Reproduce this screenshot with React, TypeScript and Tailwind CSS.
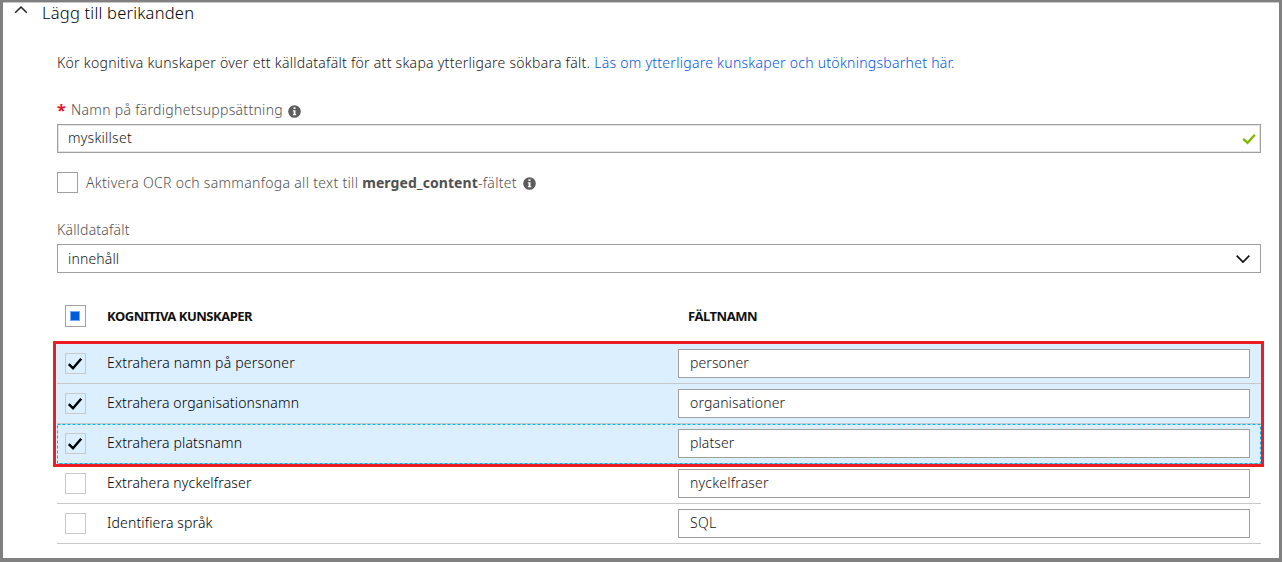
import React from "react";

const rows = [
  { label: "Extrahera namn på personer", field: "personer", checked: true, focus: false, lt: "tracking-[0.2px]", ft: "tracking-[0.1px]" },
  { label: "Extrahera organisationsnamn", field: "organisationer", checked: true, focus: false, lt: "tracking-[0.16px]", ft: "tracking-[0.15px]" },
  { label: "Extrahera platsnamn", field: "platser", checked: true, focus: true, lt: "tracking-[0.17px]", ft: "tracking-[0.1px]" },
  { label: "Extrahera nyckelfraser", field: "nyckelfraser", checked: false, focus: false, lt: "tracking-[0.16px]", ft: "tracking-[0.2px]" },
  { label: "Identifiera språk", field: "SQL", checked: false, focus: false, lt: "tracking-[0.15px]", ft: "tracking-[0.3px]" },
];

function Info() {
  return (
    <svg className="size-[13px] shrink-0" viewBox="0 0 13 13">
      <circle cx="6.5" cy="6.5" r="6.3" fill="#5c5c5c" />
      <path d="M5.500 2.200h2v1.800h-2zM4.900 5.200h2.600v4h.7v1.100H4.900V9.200h.7V6.300h-.7z" fill="#fff" />
    </svg>
  );
}

function Row({ r }: { r: (typeof rows)[number] }) {
  return (
    <div className={"relative flex h-10 items-start border-b border-[#c8c8c8] " + (r.checked ? "bg-[#dceffe]" : "bg-white")}>
      <div className={"ml-2 mt-[9px] flex size-[21px] shrink-0 items-center border border-[#c8c8c8] pl-px " + (r.checked ? "" : "bg-white")}>
        {r.checked && (
          <svg className="h-[14px] w-[16px]" viewBox="0 0 16 14">
            <path d="M1.800 7.200 6 11.300 14.200 1.800" fill="none" stroke="#000" strokeWidth="2.500" />
          </svg>
        )}
      </div>
      <div className={"ml-[21px] mt-[9px] w-[571px] shrink-0 leading-5 text-black " + r.lt}>{r.label}</div>
      <div className={"mt-[5px] h-[29px] w-[572px] border border-[#a0a0a0] bg-white pl-[11px] leading-[25px] text-[#151515] " + r.ft}>{r.field}</div>
      {r.focus && (
        <svg className="absolute left-0 top-0 h-10 w-[1204px]" viewBox="0 0 1204 40">
          <rect x="0.5" y="0.5" width="1203" height="39" fill="none" stroke="#00b4f0" strokeDasharray="3 2" />
        </svg>
      )}
    </div>
  );
}

export default function App() {
  return (
    <div className="h-[562px] w-[1283px] overflow-hidden bg-white pr-px font-['Noto_Sans',sans-serif] text-[14px] font-[360]">
      <div className="relative h-[562px] w-[1282px] border-b-4 border-l-[3px] border-r-[3px] border-t-2 border-[#808080] bg-white">
        <div className="flex h-[51px] items-start border-t border-[#c8c8c8] pl-[11px]">
          <svg className="mt-[1px] h-[10px] w-[14px]" viewBox="0 0 14 10">
            <path d="M1.200 8.800 7 3l5.800 5.800" fill="none" stroke="#222" strokeWidth="1.500" />
          </svg>
          <h2 className="ml-[14px] whitespace-nowrap text-[16.5px] leading-[20px] tracking-[0.22px] text-black">Lägg till berikanden</h2>
        </div>
        <div className="ml-[54px] w-[1204px]">
          <p className="h-[47px] whitespace-nowrap leading-5 tracking-[0.275px] text-[#202020]">
            <span>Kör kognitiva kunskaper över ett källdatafält för att skapa ytterligare sökbara fält.</span>{" "}
            <a className="text-[#0055dc]">Läs om ytterligare kunskaper och utökningsbarhet här.</a>
          </p>
          <div className="flex h-6 items-start leading-5 text-[#505050]">
            <span className="w-[14px] text-[16px] font-bold leading-5 text-[#e81123]">*</span>
            <span className="tracking-[0.3px]">Namn på färdighetsuppsättning</span>
            <span className="ml-[5px] mt-[4.5px]"><Info /></span>
          </div>
          <div className="flex h-[29px] items-start justify-between border border-[#a0a0a0] pl-[10px] pr-1 leading-[25px] text-[#151515] shadow-[inset_0_0_0_1px_#e4e4e4]">
            <span className="tracking-[0.25px]">myskillset</span>
            <svg className="mt-2 h-[12px] w-[14px]" viewBox="0 0 14 12">
              <path d="M1.200 5.800 5.500 9.800 12.800 1.800" fill="none" stroke="#7fba00" strokeWidth="2.300" />
            </svg>
          </div>
          <div className="mt-[19px] flex h-12 items-start leading-[21px] text-[#505050]">
            <span className="size-[21px] border border-[#a0a0a0]" />
            <span className="ml-2 whitespace-nowrap tracking-[0.31px]">Aktivera OCR och sammanfoga all text till <b className="tracking-[0.08px]">merged_content</b>-fältet</span>
            <span className="ml-[6px] mt-[5px]"><Info /></span>
          </div>
          <div className="h-6 leading-5 tracking-[0.2px] text-[#505050]">Källdatafält</div>
          <div className="flex h-[29px] items-center justify-between border border-[#a0a0a0] pl-[10px] pr-[9px] leading-[27px] text-[#151515]">
            <span className="tracking-[0.15px]">innehåll</span>
            <svg className="h-[10px] w-4" viewBox="0 0 16 10">
              <path d="M1.700 1.700 8 8l6.300-6.300" fill="none" stroke="#111" strokeWidth="1.700" />
            </svg>
          </div>
          <div className="mt-8 flex h-[39px] items-start pl-2 text-[13px] font-bold leading-[23px] text-[#111]">
            <span className="flex h-[22px] w-[21px] items-center border border-[#a0a0a0] pl-1">
              <span className="size-[10px] border border-[#6fa8ee] bg-[#015cda]" />
            </span>
            <span className="ml-[21px] w-[581px] tracking-[-0.48px]">KOGNITIVA KUNSKAPER</span>
            <span className="tracking-[-0.45px]">FÄLTNAMN</span>
          </div>
          <div>{rows.map((r) => <Row key={r.label} r={r} />)}</div>
        </div>
        <div className="pointer-events-none absolute left-[50px] top-[339px] h-[126px] w-[1211px] border-[3px] border-[#ee1c25]" />
      </div>
    </div>
  );
}
